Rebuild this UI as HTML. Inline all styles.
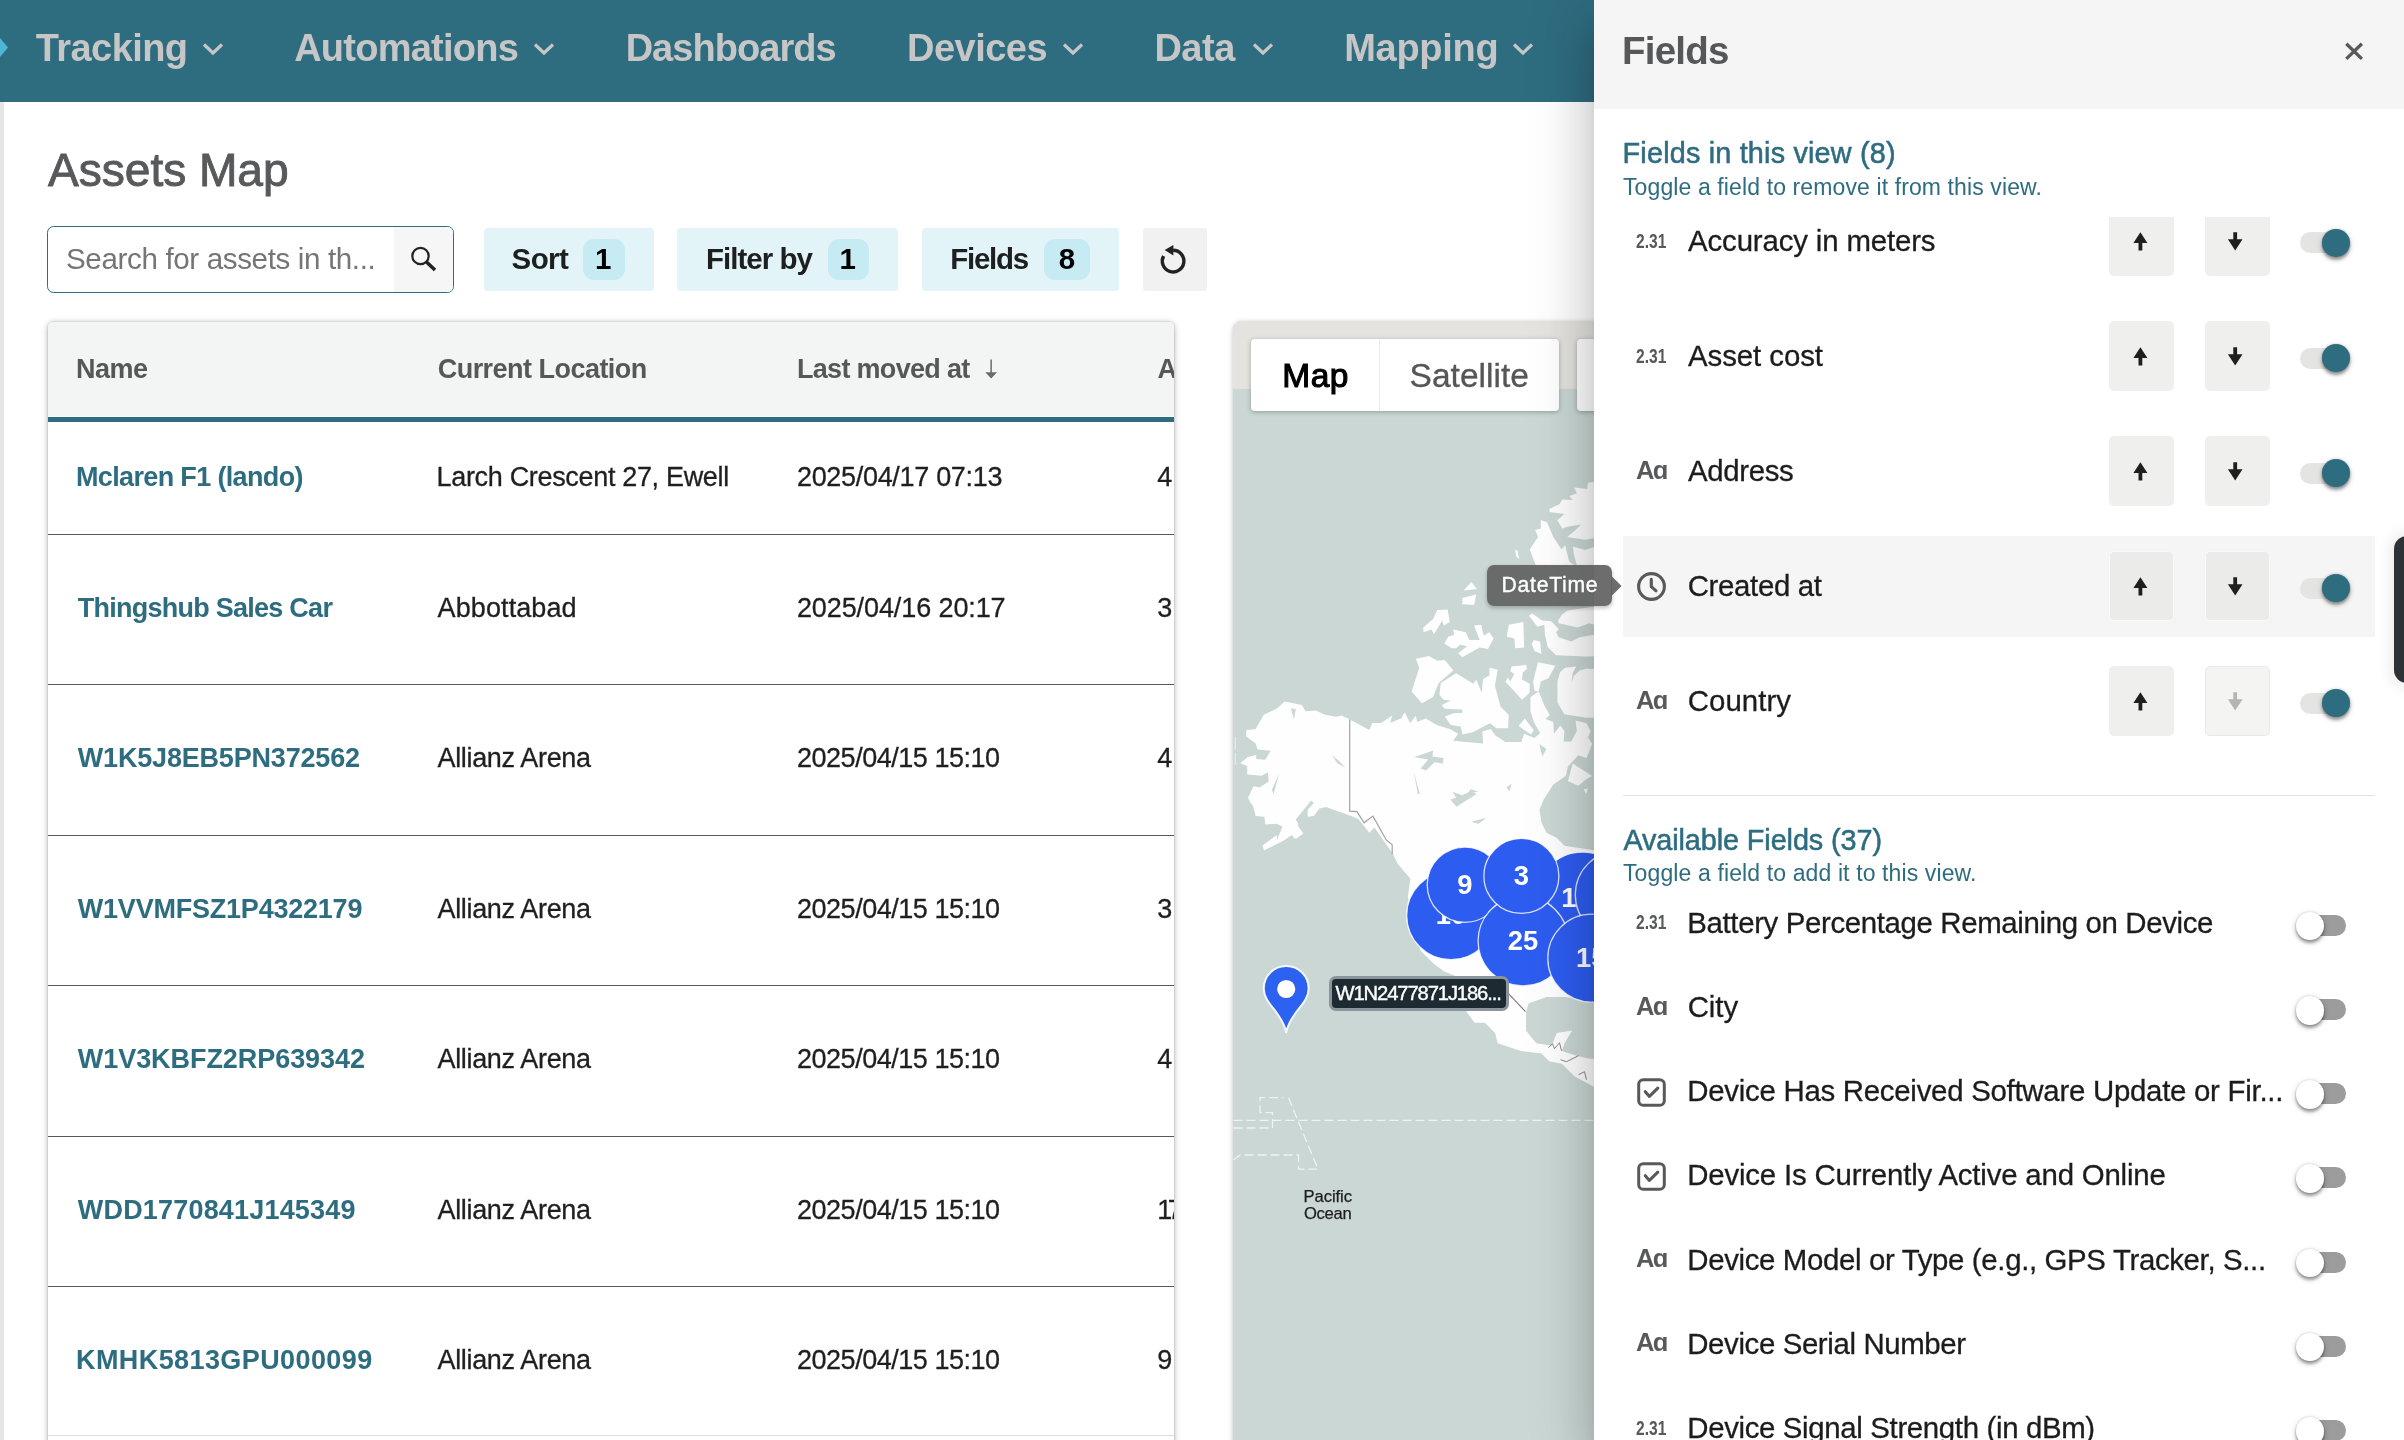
<!DOCTYPE html>
<html><head><meta charset="utf-8"><title>Assets Map</title>
<style>
*{box-sizing:border-box;margin:0;padding:0}
html,body{width:2404px;height:1440px;overflow:hidden;background:#fff;font-family:"Liberation Sans",sans-serif;}
.abs,.t{position:absolute}
.t{white-space:nowrap;line-height:1;}
#nav{left:0;top:0;width:2404px;height:102px;background:#2e6c80}
#leftbar{left:0;top:102px;width:4px;height:1338px;background:#e6e6e4}
.btn{background:#e3f4f9;border-radius:3.5px;top:228px;height:63px}
.badge{background:#c6ebf3;border-radius:11px;top:239px;height:41px}
#card{left:48px;top:321.6px;width:1126.3px;height:1130px;border-radius:5px;background:#fff;box-shadow:0 1px 6px rgba(0,0,0,.32),0 0 2px rgba(0,0,0,.2);overflow:hidden}
#thead{left:0;top:0;width:1127px;height:94px;background:#f3f5f4;border-bottom:0}
.rl{left:0;width:1127px;height:1px;background:#58595b}
#panel{left:1594px;top:0;width:810px;height:1440px;background:#fff;box-shadow:0 16px 20px -10px rgba(0,0,0,.2),0 32px 48px 4px rgba(0,0,0,.14),0 12px 60px 10px rgba(0,0,0,.12)}
#phead{left:0;top:0;width:810px;height:108.5px;background:#f4f5f4}
.ab{width:65px;height:70px;border-radius:5px;background:#efefee}
.trk{width:50px;height:21px;border-radius:11px}
.knob{width:28px;height:28px;border-radius:50%}
#root{position:absolute;left:0;top:0;width:2404px;height:1440px;overflow:hidden;will-change:transform}
</style></head><body><div id="root">

<div id="nav" class="abs"></div>
<svg class="abs" style="left:0;top:35px" width="10" height="26" viewBox="0 0 10 26"><path d="M0 3 L8 12.5 L0 22 Z" fill="#4fb6d6"/></svg>
<span class="t" style="left:35.80px;top:29px;font-size:38px;font-weight:700;color:#c7c6c6;letter-spacing:-0.573px;">Tracking</span>
<svg class="abs" style="left:200.7px;top:40px" width="24" height="18" viewBox="0 0 24 18"><path d="M3 4.5 L12 13 L21 4.5" fill="none" stroke="#c7c6c6" stroke-width="3.2"/></svg>
<span class="t" style="left:294.20px;top:29px;font-size:38px;font-weight:700;color:#c7c6c6;letter-spacing:-0.764px;">Automations</span>
<svg class="abs" style="left:532.1px;top:40px" width="24" height="18" viewBox="0 0 24 18"><path d="M3 4.5 L12 13 L21 4.5" fill="none" stroke="#c7c6c6" stroke-width="3.2"/></svg>
<span class="t" style="left:625.64px;top:29px;font-size:38px;font-weight:700;color:#c7c6c6;letter-spacing:-0.943px;">Dashboards</span>
<span class="t" style="left:906.94px;top:29px;font-size:38px;font-weight:700;color:#c7c6c6;letter-spacing:-0.501px;">Devices</span>
<svg class="abs" style="left:1061.4px;top:40px" width="24" height="18" viewBox="0 0 24 18"><path d="M3 4.5 L12 13 L21 4.5" fill="none" stroke="#c7c6c6" stroke-width="3.2"/></svg>
<span class="t" style="left:1154.41px;top:29px;font-size:38px;font-weight:700;color:#c7c6c6;letter-spacing:-0.500px;">Data</span>
<svg class="abs" style="left:1250.7px;top:40px" width="24" height="18" viewBox="0 0 24 18"><path d="M3 4.5 L12 13 L21 4.5" fill="none" stroke="#c7c6c6" stroke-width="3.2"/></svg>
<span class="t" style="left:1344.21px;top:29px;font-size:38px;font-weight:700;color:#c7c6c6;letter-spacing:-0.289px;">Mapping</span>
<svg class="abs" style="left:1511px;top:40px" width="24" height="18" viewBox="0 0 24 18"><path d="M3 4.5 L12 13 L21 4.5" fill="none" stroke="#c7c6c6" stroke-width="3.2"/></svg>
<div id="leftbar" class="abs"></div>
<span class="t" style="left:48.00px;top:147px;font-size:46.2px;font-weight:400;color:#58595b;letter-spacing:-0.073px;-webkit-text-stroke:0.9px #58595b;">Assets Map</span>
<div class="abs" style="left:46.8px;top:226px;width:407.2px;height:67px;border:1.6px solid #2e6c80;border-radius:6.5px;background:#fff;overflow:hidden"><div class="abs" style="left:346.3px;top:0;width:60px;height:65px;background:#f6f6f6"></div></div>
<span class="t" style="left:66.00px;top:244px;font-size:29.6px;font-weight:400;color:#757575;letter-spacing:-0.373px;">Search for assets in th...</span>
<svg class="abs" style="left:408px;top:243px" width="32" height="32" viewBox="0 0 32 32"><circle cx="12.5" cy="13" r="8.2" fill="none" stroke="#222" stroke-width="2.2"/><path d="M18.5 19 L27 27" stroke="#222" stroke-width="3.6" stroke-linecap="butt"/></svg>
<div class="abs btn" style="left:484px;width:170px"></div>
<div class="abs badge" style="left:583px;width:42px"></div>
<span class="t" style="left:511.50px;top:244px;font-size:29.5px;font-weight:700;color:#1d1f20;letter-spacing:-0.543px;">Sort</span>
<span class="t" style="left:594.90px;top:244px;font-size:29.5px;font-weight:700;color:#000;">1</span>
<div class="abs btn" style="left:677px;width:221px"></div>
<div class="abs badge" style="left:828px;width:41px"></div>
<span class="t" style="left:706.00px;top:244px;font-size:29.5px;font-weight:700;color:#1d1f20;letter-spacing:-0.971px;">Filter by</span>
<span class="t" style="left:839.50px;top:244px;font-size:29.5px;font-weight:700;color:#000;">1</span>
<div class="abs btn" style="left:922px;width:197px"></div>
<div class="abs badge" style="left:1044px;width:46px"></div>
<span class="t" style="left:950.20px;top:244px;font-size:29.5px;font-weight:700;color:#1d1f20;letter-spacing:-1.245px;">Fields</span>
<span class="t" style="left:1058.70px;top:244px;font-size:29.5px;font-weight:700;color:#000;">8</span>
<div class="abs" style="left:1143px;top:228px;width:64px;height:63px;border-radius:3.5px;background:#f1f1f1"></div>
<svg class="abs" style="left:1155px;top:240px" width="40" height="40" viewBox="0 0 40 40"><path d="M18.1 10.3 A10.8 10.8 0 1 1 8.56 16.03" fill="none" stroke="#222" stroke-width="3.4"/><path d="M18.4 5 L18.4 15.4 L9.6 10.1 Z" fill="#222"/></svg>
<div id="card" class="abs"><div id="thead" class="abs"></div><div class="abs" style="left:0;top:95px;width:1127px;height:5px;background:#2e6c80"></div>
<div class="abs rl" style="top:212px"></div>
<div class="abs rl" style="top:362px"></div>
<div class="abs rl" style="top:513px"></div>
<div class="abs rl" style="top:663px"></div>
<div class="abs rl" style="top:814px"></div>
<div class="abs rl" style="top:964px"></div>
<div class="abs" style="left:0;top:1113px;width:1127px;height:1px;background:#dedede"></div>
</div>
<span class="t" style="left:76.00px;top:356px;font-size:27px;font-weight:700;color:#555759;letter-spacing:-0.490px;">Name</span>
<span class="t" style="left:437.71px;top:356px;font-size:27px;font-weight:700;color:#555759;letter-spacing:-0.527px;">Current Location</span>
<span class="t" style="left:797.00px;top:356px;font-size:27px;font-weight:700;color:#555759;letter-spacing:-0.696px;">Last moved at</span>
<svg class="abs" style="left:984px;top:357px" width="16" height="24" viewBox="0 0 16 24"><path d="M7.15 2.6 V16" fill="none" stroke="#6b6b6b" stroke-width="1.5"/><path d="M1.3 15.3 H13 L7.15 21.5 Z" fill="#6b6b6b"/></svg>
<div class="abs" style="left:0;top:0;width:1174.3px;height:1440px;overflow:hidden">
<span class="t" style="left:1157.50px;top:356px;font-size:27px;font-weight:700;color:#555759;">A</span>
<span class="t" style="left:76.00px;top:464px;font-size:27px;font-weight:700;color:#2e6c80;letter-spacing:-0.650px;">Mclaren F1 (lando)</span>
<span class="t" style="left:436.56px;top:464px;font-size:27px;font-weight:400;color:#1f1f1f;letter-spacing:-0.327px;-webkit-text-stroke:0.3px #1f1f1f;">Larch Crescent 27, Ewell</span>
<span class="t" style="left:796.96px;top:464px;font-size:27px;font-weight:400;color:#1f1f1f;letter-spacing:-0.312px;-webkit-text-stroke:0.3px #1f1f1f;">2025/04/17 07:13</span>
<span class="t" style="left:1157.30px;top:464px;font-size:27px;font-weight:400;color:#1f1f1f;-webkit-text-stroke:0.3px #1f1f1f;">4</span>
<span class="t" style="left:77.78px;top:595px;font-size:27px;font-weight:700;color:#2e6c80;letter-spacing:-0.746px;">Thingshub Sales Car</span>
<span class="t" style="left:437.54px;top:595px;font-size:27px;font-weight:400;color:#1f1f1f;letter-spacing:0.108px;-webkit-text-stroke:0.3px #1f1f1f;">Abbottabad</span>
<span class="t" style="left:796.96px;top:595px;font-size:27px;font-weight:400;color:#1f1f1f;letter-spacing:-0.101px;-webkit-text-stroke:0.3px #1f1f1f;">2025/04/16 20:17</span>
<span class="t" style="left:1157.30px;top:595px;font-size:27px;font-weight:400;color:#1f1f1f;-webkit-text-stroke:0.3px #1f1f1f;">3</span>
<span class="t" style="left:77.82px;top:745px;font-size:27px;font-weight:700;color:#2e6c80;letter-spacing:-0.188px;">W1K5J8EB5PN372562</span>
<span class="t" style="left:437.54px;top:745px;font-size:27px;font-weight:400;color:#1f1f1f;letter-spacing:-0.342px;-webkit-text-stroke:0.3px #1f1f1f;">Allianz Arena</span>
<span class="t" style="left:796.96px;top:745px;font-size:27px;font-weight:400;color:#1f1f1f;letter-spacing:-0.469px;-webkit-text-stroke:0.3px #1f1f1f;">2025/04/15 15:10</span>
<span class="t" style="left:1157.30px;top:745px;font-size:27px;font-weight:400;color:#1f1f1f;-webkit-text-stroke:0.3px #1f1f1f;">4</span>
<span class="t" style="left:77.82px;top:896px;font-size:27px;font-weight:700;color:#2e6c80;letter-spacing:-0.221px;">W1VVMFSZ1P4322179</span>
<span class="t" style="left:437.54px;top:896px;font-size:27px;font-weight:400;color:#1f1f1f;letter-spacing:-0.342px;-webkit-text-stroke:0.3px #1f1f1f;">Allianz Arena</span>
<span class="t" style="left:796.96px;top:896px;font-size:27px;font-weight:400;color:#1f1f1f;letter-spacing:-0.469px;-webkit-text-stroke:0.3px #1f1f1f;">2025/04/15 15:10</span>
<span class="t" style="left:1157.30px;top:896px;font-size:27px;font-weight:400;color:#1f1f1f;-webkit-text-stroke:0.3px #1f1f1f;">3</span>
<span class="t" style="left:77.82px;top:1046px;font-size:27px;font-weight:700;color:#2e6c80;letter-spacing:-0.060px;">W1V3KBFZ2RP639342</span>
<span class="t" style="left:437.54px;top:1046px;font-size:27px;font-weight:400;color:#1f1f1f;letter-spacing:-0.342px;-webkit-text-stroke:0.3px #1f1f1f;">Allianz Arena</span>
<span class="t" style="left:796.96px;top:1046px;font-size:27px;font-weight:400;color:#1f1f1f;letter-spacing:-0.469px;-webkit-text-stroke:0.3px #1f1f1f;">2025/04/15 15:10</span>
<span class="t" style="left:1157.30px;top:1046px;font-size:27px;font-weight:400;color:#1f1f1f;-webkit-text-stroke:0.3px #1f1f1f;">4</span>
<span class="t" style="left:77.82px;top:1197px;font-size:27px;font-weight:700;color:#2e6c80;letter-spacing:0.186px;">WDD1770841J145349</span>
<span class="t" style="left:437.54px;top:1197px;font-size:27px;font-weight:400;color:#1f1f1f;letter-spacing:-0.342px;-webkit-text-stroke:0.3px #1f1f1f;">Allianz Arena</span>
<span class="t" style="left:796.96px;top:1197px;font-size:27px;font-weight:400;color:#1f1f1f;letter-spacing:-0.469px;-webkit-text-stroke:0.3px #1f1f1f;">2025/04/15 15:10</span>
<span class="t" style="left:1157.30px;top:1197px;font-size:27px;font-weight:400;color:#1f1f1f;-webkit-text-stroke:0.3px #1f1f1f;letter-spacing:-4.5px;">17</span>
<span class="t" style="left:76.00px;top:1347px;font-size:27px;font-weight:700;color:#2e6c80;letter-spacing:0.411px;">KMHK5813GPU000099</span>
<span class="t" style="left:437.54px;top:1347px;font-size:27px;font-weight:400;color:#1f1f1f;letter-spacing:-0.342px;-webkit-text-stroke:0.3px #1f1f1f;">Allianz Arena</span>
<span class="t" style="left:796.96px;top:1347px;font-size:27px;font-weight:400;color:#1f1f1f;letter-spacing:-0.469px;-webkit-text-stroke:0.3px #1f1f1f;">2025/04/15 15:10</span>
<span class="t" style="left:1157.30px;top:1347px;font-size:27px;font-weight:400;color:#1f1f1f;-webkit-text-stroke:0.3px #1f1f1f;">9</span>
</div>
<div class="abs" style="left:1232.5px;top:321.3px;width:420px;height:1140px;border-radius:9px;overflow:hidden;background:#cad7d5;box-shadow:0 1px 5px rgba(0,0,0,.25)">
<svg class="abs" style="left:0;top:0" width="420" height="1140" viewBox="1232.5 321.3 420 1140">
<rect x="1232" y="321" width="420" height="68.2" fill="#e5e3df"/>
<polygon points="1284.2,701.8 1301.5,705.3 1305.0,711.5 1315.4,710.8 1324.4,715.0 1335.6,717.1 1341.1,715.7 1349.4,719.9 1368.9,730.3 1371.7,723.3 1380.7,723.3 1391.8,715.7 1389.7,723.3 1400.8,718.5 1404.2,712.5 1409.7,723.6 1415.3,716.0 1416.7,722.2 1425.0,718.8 1437.5,725.7 1449.3,729.2 1457.6,734.0 1452.8,741.0 1482.6,743.8 1481.9,731.9 1490.3,729.2 1495.1,736.1 1504.9,742.4 1520.8,742.4 1523.6,734.0 1534.0,738.2 1539.6,733.3 1533.3,722.2 1529.9,711.1 1529.9,697.2 1538.2,691.7 1544.4,706.9 1549.3,715.3 1545.1,719.4 1552.8,722.2 1553.5,734.0 1559.7,725.7 1563.9,731.2 1563.2,741.7 1570.8,741.7 1576.4,731.2 1575.0,720.8 1586.1,723.6 1590.3,731.9 1587.5,737.5 1591.7,744.4 1586.1,758.3 1577.8,755.6 1567.4,766.7 1565.3,776.4 1552.8,784.7 1543.1,800.0 1539.0,810.0 1541.0,823.0 1546.0,833.0 1556.0,838.0 1564.0,846.0 1610.0,853.0 1610.0,1000.0 1593.6,999.9 1564.0,997.3 1546.0,997.3 1528.0,1003.7 1525.5,1012.7 1525.5,1030.7 1535.8,1043.5 1551.2,1046.1 1556.3,1033.3 1571.7,1030.7 1564.0,1043.5 1561.4,1051.2 1576.9,1056.4 1589.7,1059.0 1610.0,1060.0 1610.0,1095.0 1593.6,1087.2 1574.3,1076.9 1561.4,1064.1 1548.6,1061.5 1540.9,1053.8 1520.3,1051.2 1497.2,1043.5 1494.6,1033.3 1484.4,1023.0 1474.1,1023.0 1466.4,1012.7 1456.1,976.7 1443.3,971.6 1433.0,963.9 1420.1,951.0 1407.3,897.1 1409.9,879.1 1397.0,863.7 1391.9,853.4 1373.9,827.7 1368.9,833.1 1357.8,819.2 1349.4,815.7 1332.8,810.1 1325.8,807.4 1318.9,808.8 1313.3,816.4 1307.1,817.1 1307.1,810.1 1313.3,803.2 1310.6,801.1 1295.3,819.9 1298.1,824.7 1296.8,825.1 1301.9,832.8 1294.2,839.3 1291.7,835.4 1281.4,841.8 1263.4,850.8 1262.1,845.7 1276.2,835.4 1276.5,840.0 1282.1,826.8 1275.8,824.0 1264.7,824.7 1264.0,817.1 1255.0,816.4 1252.9,807.4 1247.4,798.3 1252.9,786.5 1259.2,787.9 1268.2,781.7 1267.5,772.6 1261.2,776.1 1246.7,774.7 1246.7,766.4 1239.7,763.6 1247.4,757.4 1255.7,755.3 1255.7,759.4 1264.7,760.1 1270.3,751.1 1257.1,749.7 1255.0,743.5 1245.3,736.5 1246.0,730.3 1255.0,729.6 1263.3,715.0 1276.5,708.8" fill="#fefefe" />
<polygon points="1436.8,610.4 1447.2,609.7 1449.3,622.2 1443.1,625.7 1441.7,620.8 1433.3,634.7 1431.2,629.9 1422.9,632.6 1422.9,627.8 1432.6,619.4" fill="#fefefe" />
<polygon points="1452.8,629.9 1465.3,632.6 1468.8,640.3 1479.2,640.3 1473.6,625.7 1480.6,625.0 1483.3,636.1 1488.9,632.6 1493.1,638.9 1487.5,649.3 1479.2,647.9 1461.8,657.6 1457.6,653.5 1466.7,646.5 1459.7,645.1 1455.6,648.6 1451.4,648.6 1443.8,643.8 1447.9,636.8 1453.5,635.4" fill="#fefefe" />
<polygon points="1508.3,625.0 1522.9,622.2 1523.6,647.9 1514.6,648.6 1513.9,638.9 1506.2,636.8" fill="#fefefe" />
<polygon points="1533.3,640.3 1539.6,641.7 1541.0,654.2 1534.0,651.4 1531.2,644.4" fill="#fefefe" />
<polygon points="1528.5,616.0 1531.9,613.9 1541.7,620.8 1550.7,621.5 1558.3,629.2 1555.6,632.6 1558.3,637.5 1570.8,641.7 1579.2,637.5 1608.3,632.6 1608.3,656.2 1584.7,656.9 1555.6,655.6 1547.2,647.2 1544.4,634.7 1543.8,625.0 1536.8,627.1" fill="#fefefe" />
<polygon points="1557.6,620.8 1561.1,615.3 1566.7,611.1 1608.3,604.2 1608.3,629.9 1588.9,623.6 1577.1,627.8 1558.3,623.6" fill="#fefefe" />
<polygon points="1415.3,659.0 1428.5,656.2 1436.8,661.1 1444.4,660.4 1452.8,670.8 1438.2,683.3 1432.6,697.2 1421.5,703.5 1411.1,691.7 1418.8,668.1" fill="#fefefe" />
<polygon points="1440.3,683.3 1455.6,673.6 1472.9,684.0 1475.7,679.9 1481.2,693.1 1482.6,679.2 1488.9,675.7 1488.9,668.1 1497.2,670.1 1494.4,686.1 1500.0,706.9 1508.3,715.3 1507.6,728.5 1495.8,728.5 1489.6,723.6 1472.2,732.6 1461.8,734.7 1460.4,727.1 1450.0,725.0 1444.4,716.7 1453.5,713.2 1461.8,713.2 1461.8,709.7 1444.4,709.0 1441.0,705.6 1450.0,700.7 1443.1,700.0 1438.9,695.1" fill="#fefefe" />
<polygon points="1511.1,666.7 1525.7,665.3 1526.4,669.4 1522.2,672.9 1521.5,679.9 1529.2,684.0 1529.2,693.1 1521.5,700.0 1504.9,681.9 1507.6,677.8 1509.7,681.9 1513.9,674.3 1509.7,671.5" fill="#fefefe" />
<polygon points="1537.5,662.5 1554.9,666.0 1547.9,678.5 1540.3,681.9 1538.2,691.7 1534.0,691.0 1532.6,681.9" fill="#fefefe" />
<polygon points="1564.6,668.1 1575.7,666.7 1572.2,673.6 1570.8,683.3 1573.6,675.7 1579.2,670.8 1586.1,668.8 1608.3,670.8 1608.3,718.1 1586.1,718.1 1563.9,714.6 1556.9,702.8 1556.9,681.9 1559.7,672.2" fill="#fefefe" />
<polygon points="1518.1,726.4 1524.3,718.8 1533.3,730.6 1530.6,734.7" fill="#fefefe" />
<polygon points="1572.2,763.9 1591.7,776.4 1586.1,779.2 1577.8,786.1 1567.4,781.2" fill="#fefefe" />
<polygon points="1583.3,789.6 1587.5,788.9 1585.4,794.4" fill="#fefefe" />
<polygon points="1608.3,480.3 1587.5,483.1 1586.8,489.3 1573.6,487.9 1576.4,493.5 1568.8,496.2 1572.2,500.4 1561.8,499.7 1559.0,504.6 1548.6,509.4 1549.3,512.2 1563.9,514.3 1556.9,520.6 1561.8,528.9 1568.1,526.8 1580.6,524.7 1575.0,530.3 1566.7,537.2 1584.7,540.0 1608.3,535.8" fill="#fefefe" />
<polygon points="1540.3,520.3 1546.5,522.6 1552.8,537.2 1561.1,549.7 1564.6,545.6 1568.8,562.2 1575.0,565.7 1535.4,565.7 1534.0,562.2 1529.2,549.7 1537.5,537.2 1534.7,530.3 1540.3,528.9" fill="#fefefe" />
<polygon points="1572.2,546.9 1584.7,550.4 1608.3,542.1 1608.3,565.7 1576.4,565.7 1573.6,555.3" fill="#fefefe" />
<polygon points="1470.8,582.4 1463.2,590.7 1476.4,589.3" fill="#fefefe" />
<polygon points="1461.8,598.3 1475.7,594.9 1473.6,605.3 1461.8,604.6" fill="#fefefe" />
<polygon points="1514.6,551.1 1516.7,550.4 1518.8,559.4 1516.0,557.4" fill="#fefefe" />
<polygon points="1295.3,833.8 1300.8,831.0 1302.9,833.8 1295.3,839.3" fill="#fefefe" />
<polygon points="1413.9,757.6 1432.6,750.7 1431.9,756.9 1443.1,758.3 1442.4,763.9 1434.0,762.5 1425.7,770.8 1420.1,768.8 1427.8,759.7" fill="#cad7d5" />
<polygon points="1450.0,800.0 1470.8,791.7 1476.0,794.4 1456.0,807.0" fill="#cad7d5" />
<polygon points="1470.8,822.0 1486.0,818.0 1478.0,824.0" fill="#cad7d5" />
<polygon points="1331.4,755.3 1336.9,763.6 1344.6,767.8 1339.7,762.2" fill="#cad7d5" />
<polygon points="1290.4,708.8 1295.3,709.2 1293.5,719.9" fill="#cad7d5" />
<polygon points="1278.6,774.0 1273.1,794.2 1271.4,790.0" fill="#cad7d5" />
<polygon points="1538.9,744.4 1545.8,749.3 1541.7,756.9" fill="#cad7d5" />
<polygon points="1506.2,787.5 1511.1,784.0 1509.0,791.7" fill="#cad7d5" />
<polygon points="1452.1,792.4 1465.3,796.5 1470.1,789.6 1477.8,791.7 1469.4,793.8 1465.3,800.0 1456.9,800.0" fill="#cad7d5" />
<polygon points="1413.2,772.2 1419.4,794.4 1417.4,794.4" fill="#cad7d5" />
<path d="M1349.2 719.9 L1349.2 811.5 L1356.4 811.9 L1363.6 823.1 L1372.4 816.4 L1385.6 840.0 L1391.7 845.0 L1391.7 854.5" fill="none" stroke="#a3a3a3" stroke-width="1.2"/>
<path d="M1508 994 L1525 1012" stroke="#7d7d7d" stroke-width="1.2"/>
<path d="M1548 1048 l4 -4 l2 5 l5 -6 l2 8 M1560 1060 l6 2 l12 -6 M1578 1075 l6 -3 l2 8" fill="none" stroke="#8a8a8a" stroke-width="1"/>
<path d="M1233 1120.6 H1600" fill="none" stroke="#eef3f1" stroke-width="1.3" stroke-dasharray="9 4"/>
<path d="M1233 1128.3 H1272 V1113 H1259.5 V1098 H1283" fill="none" stroke="#eef3f1" stroke-width="1.3" stroke-dasharray="9 4"/>
<path d="M1288 1098 L1317.5 1169.5 H1298 V1155.3 H1240 L1233 1160" fill="none" stroke="#eef3f1" stroke-width="1.3" stroke-dasharray="9 4"/>
<path d="M1234.8 737 V765" stroke="#e6eeec" stroke-width="1.2" stroke-dasharray="13 3" fill="none"/>
<circle cx="1450.5" cy="915.7" r="44.3" fill="#2d5cf0" stroke="rgba(255,255,255,.82)" stroke-width="1.3"/>
<text x="1450.5" y="924.6" font-family="Liberation Sans, sans-serif" font-weight="700" font-size="27.4" fill="#fff" text-anchor="middle">10</text>
<circle cx="1582" cy="898.5" r="46" fill="#2d5cf0" stroke="rgba(255,255,255,.82)" stroke-width="1.3"/>
<text x="1576" y="907.4" font-family="Liberation Sans, sans-serif" font-weight="700" font-size="27.4" fill="#fff" text-anchor="middle">12</text>
<circle cx="1464.3" cy="885" r="37.6" fill="#2d5cf0" stroke="rgba(255,255,255,.82)" stroke-width="1.3"/>
<text x="1464.3" y="893.9" font-family="Liberation Sans, sans-serif" font-weight="700" font-size="27.4" fill="#fff" text-anchor="middle">9</text>
<circle cx="1522.6" cy="941.3" r="45" fill="#2d5cf0" stroke="rgba(255,255,255,.82)" stroke-width="1.3"/>
<text x="1522.6" y="950.2" font-family="Liberation Sans, sans-serif" font-weight="700" font-size="27.4" fill="#fff" text-anchor="middle">25</text>
<circle cx="1618.8" cy="895" r="44" fill="#2d5cf0" stroke="rgba(255,255,255,.82)" stroke-width="1.3"/>
<circle cx="1591.3" cy="958.5" r="44" fill="#2d5cf0" stroke="rgba(255,255,255,.82)" stroke-width="1.3"/>
<text x="1590.8" y="967.4" font-family="Liberation Sans, sans-serif" font-weight="700" font-size="27.4" fill="#fff" text-anchor="middle">15</text>
<circle cx="1520.9" cy="876.2" r="37.5" fill="#2d5cf0" stroke="rgba(255,255,255,.82)" stroke-width="1.3"/>
<text x="1520.9" y="885.1" font-family="Liberation Sans, sans-serif" font-weight="700" font-size="27.4" fill="#fff" text-anchor="middle">3</text>
<path d="M1285.7 1032.5 C1284.5 1026 1280.7 1019.5 1277.2 1014.5 C1271.7 1006.5 1263.3 999.5 1263.3 988.7 A22.4 22.4 0 1 1 1308.1 988.7 C1308.1 999.5 1299.7 1006.5 1294.2 1014.5 C1290.7 1019.5 1286.9 1026 1285.7 1032.5 Z" fill="#2d62f0" stroke="#fff" stroke-width="2" stroke-opacity=".9" stroke-linejoin="round"/>
<circle cx="1285.7" cy="989.3" r="9.1" fill="#fff"/>
</svg>
</div>
<div class="abs" style="left:1251px;top:339px;width:308px;height:72px;border-radius:4px;background:#fff;box-shadow:0 1px 5px rgba(0,0,0,.28)"></div>
<div class="abs" style="left:1378.5px;top:339px;width:1.5px;height:72px;background:#ececec"></div>
<div class="abs" style="left:1577px;top:339px;width:60px;height:72px;border-radius:4px;background:#fff;box-shadow:0 1px 5px rgba(0,0,0,.28)"></div>
<span class="t" style="left:1282.30px;top:359px;font-size:33.5px;font-weight:400;color:#000;letter-spacing:0.451px;-webkit-text-stroke:1.1px #000;">Map</span>
<span class="t" style="left:1409.50px;top:359px;font-size:33.5px;font-weight:400;color:#565656;letter-spacing:0.037px;-webkit-text-stroke:0.35px #565656;">Satellite</span>
<div class="abs" style="left:1329.2px;top:976px;width:179.8px;height:34.8px;border-radius:7px;background:#1e2a32;border:3px solid #8a949a"></div>
<span class="t" style="left:1335.50px;top:983px;font-size:20.2px;font-weight:400;color:#fff;letter-spacing:-1.107px;-webkit-text-stroke:0.4px #fff;">W1N2477871J186...</span>
<span class="t" style="left:1303.50px;top:1189px;font-size:16.6px;font-weight:400;color:#1c1c1c;letter-spacing:-0.058px;-webkit-text-stroke:0.25px #1c1c1c;">Pacific</span>
<span class="t" style="left:1304.00px;top:1206px;font-size:16.6px;font-weight:400;color:#1c1c1c;letter-spacing:-0.309px;-webkit-text-stroke:0.25px #1c1c1c;">Ocean</span>
<div id="panel" class="abs"><div id="phead" class="abs"></div></div>
<span class="t" style="left:1622.00px;top:32px;font-size:38.5px;font-weight:700;color:#555759;letter-spacing:-0.776px;">Fields</span>
<svg class="abs" style="left:2342px;top:39px" width="24" height="24" viewBox="0 0 24 24"><path d="M4.3 4.7 L19.9 19.9 M19.9 4.7 L4.3 19.9" stroke="#58595b" stroke-width="3.3" fill="none"/></svg>
<span class="t" style="left:1622.60px;top:139px;font-size:28.8px;font-weight:400;color:#2e6c80;letter-spacing:0.184px;-webkit-text-stroke:0.55px #2e6c80;">Fields in this view (8)</span>
<span class="t" style="left:1623.00px;top:176px;font-size:23px;font-weight:400;color:#2e6c80;letter-spacing:0.113px;">Toggle a field to remove it from this view.</span>
<div class="abs" style="left:1623px;top:536.4px;width:752px;height:100.2px;background:#f5f5f5"></div>
<div class="abs" style="left:1594px;top:217px;width:810px;height:600px;overflow:hidden">
<div class="abs ab" style="left:515px;top:-11px;background:#efefee;"></div>
<div class="abs ab" style="left:611px;top:-11px;background:#efefee;"></div>
<svg class="abs" style="left:515px;top:-11px" width="170" height="70" viewBox="0 0 170 70"><path d="M31.4 26.3 l-7 10.8 h5.1 v7.5 h3.8 v-7.5 h5.1 z" fill="#1f1f1f"/><path d="M124.3 26.3 h3.8 v7 h5.4 l-7.3 11.1 l-7.3 -11.1 h5.4 z" fill="#1f1f1f"/></svg>
<div class="abs ab" style="left:515px;top:104.1px;background:#efefee;"></div>
<div class="abs ab" style="left:611px;top:104.1px;background:#efefee;"></div>
<svg class="abs" style="left:515px;top:104.1px" width="170" height="70" viewBox="0 0 170 70"><path d="M31.4 26.3 l-7 10.8 h5.1 v7.5 h3.8 v-7.5 h5.1 z" fill="#1f1f1f"/><path d="M124.3 26.3 h3.8 v7 h5.4 l-7.3 11.1 l-7.3 -11.1 h5.4 z" fill="#1f1f1f"/></svg>
<div class="abs ab" style="left:515px;top:219.1px;background:#efefee;"></div>
<div class="abs ab" style="left:611px;top:219.1px;background:#efefee;"></div>
<svg class="abs" style="left:515px;top:219.1px" width="170" height="70" viewBox="0 0 170 70"><path d="M31.4 26.3 l-7 10.8 h5.1 v7.5 h3.8 v-7.5 h5.1 z" fill="#1f1f1f"/><path d="M124.3 26.3 h3.8 v7 h5.4 l-7.3 11.1 l-7.3 -11.1 h5.4 z" fill="#1f1f1f"/></svg>
<div class="abs ab" style="left:515px;top:334.1px;background:#ebebea;border:1.5px solid #f9f9f9;"></div>
<div class="abs ab" style="left:611px;top:334.1px;background:#ebebea;border:1.5px solid #f9f9f9;"></div>
<svg class="abs" style="left:515px;top:334.1px" width="170" height="70" viewBox="0 0 170 70"><path d="M31.4 26.3 l-7 10.8 h5.1 v7.5 h3.8 v-7.5 h5.1 z" fill="#1f1f1f"/><path d="M124.3 26.3 h3.8 v7 h5.4 l-7.3 11.1 l-7.3 -11.1 h5.4 z" fill="#1f1f1f"/></svg>
<div class="abs ab" style="left:515px;top:449.1px;background:#efefee;"></div>
<div class="abs ab" style="left:611px;top:449.1px;background:#f4f4f3;border:1.5px solid #e9e9e8;"></div>
<svg class="abs" style="left:515px;top:449.1px" width="170" height="70" viewBox="0 0 170 70"><path d="M31.4 26.3 l-7 10.8 h5.1 v7.5 h3.8 v-7.5 h5.1 z" fill="#1f1f1f"/><path d="M124.3 26.3 h3.8 v7 h5.4 l-7.3 11.1 l-7.3 -11.1 h5.4 z" fill="#b4b4b3"/></svg>
</div>
<span class="t" style="left:1636.30px;top:232px;font-size:19.3px;font-weight:700;color:#58595b;transform:scaleX(0.8073);transform-origin:0 0;">2.31</span>
<span class="t" style="left:1688.09px;top:226px;font-size:29.4px;font-weight:400;color:#1c1c1c;letter-spacing:-0.143px;-webkit-text-stroke:0.3px #1c1c1c;">Accuracy in meters</span>
<div class="abs trk" style="left:2300px;top:232.4px;background:#e4e4e2"></div>
<div class="abs knob" style="left:2321.5px;top:228.7px;width:28.4px;height:28.4px;background:#2e6c80;box-shadow:0 3px 3px rgba(0,0,0,.3),0 2px 6px rgba(0,0,0,.2),0 0 2px rgba(0,0,0,.2)"></div>
<span class="t" style="left:1636.30px;top:347px;font-size:19.3px;font-weight:700;color:#58595b;transform:scaleX(0.8073);transform-origin:0 0;">2.31</span>
<span class="t" style="left:1688.09px;top:341px;font-size:29.4px;font-weight:400;color:#1c1c1c;letter-spacing:-0.075px;-webkit-text-stroke:0.3px #1c1c1c;">Asset cost</span>
<div class="abs trk" style="left:2300px;top:347.5px;background:#e4e4e2"></div>
<div class="abs knob" style="left:2321.5px;top:343.8px;width:28.4px;height:28.4px;background:#2e6c80;box-shadow:0 3px 3px rgba(0,0,0,.3),0 2px 6px rgba(0,0,0,.2),0 0 2px rgba(0,0,0,.2)"></div>
<span class="t" style="left:1636.00px;top:458px;font-size:25.5px;font-weight:700;color:#58595b;letter-spacing:-1.667px;">A&#x251;</span>
<span class="t" style="left:1688.09px;top:456px;font-size:29.4px;font-weight:400;color:#1c1c1c;letter-spacing:-0.348px;-webkit-text-stroke:0.3px #1c1c1c;">Address</span>
<div class="abs trk" style="left:2300px;top:462.5px;background:#e4e4e2"></div>
<div class="abs knob" style="left:2321.5px;top:458.8px;width:28.4px;height:28.4px;background:#2e6c80;box-shadow:0 3px 3px rgba(0,0,0,.3),0 2px 6px rgba(0,0,0,.2),0 0 2px rgba(0,0,0,.2)"></div>
<svg class="abs" style="left:1635px;top:570.3px" width="33" height="33" viewBox="0 0 33 33"><circle cx="16.5" cy="16.5" r="12.9" fill="none" stroke="#58595b" stroke-width="3.1"/><path d="M16.3 9.3 V16.7 L21 20.8" fill="none" stroke="#58595b" stroke-width="3.1" stroke-linecap="round" stroke-linejoin="round"/></svg>
<span class="t" style="left:1687.73px;top:571px;font-size:29.4px;font-weight:400;color:#1c1c1c;letter-spacing:-0.331px;-webkit-text-stroke:0.3px #1c1c1c;">Created at</span>
<div class="abs trk" style="left:2300px;top:577.5px;background:#e4e4e2"></div>
<div class="abs knob" style="left:2321.5px;top:573.8px;width:28.4px;height:28.4px;background:#2e6c80;box-shadow:0 3px 3px rgba(0,0,0,.3),0 2px 6px rgba(0,0,0,.2),0 0 2px rgba(0,0,0,.2)"></div>
<span class="t" style="left:1636.00px;top:688px;font-size:25.5px;font-weight:700;color:#58595b;letter-spacing:-1.667px;">A&#x251;</span>
<span class="t" style="left:1687.73px;top:686px;font-size:29.4px;font-weight:400;color:#1c1c1c;letter-spacing:0.052px;-webkit-text-stroke:0.3px #1c1c1c;">Country</span>
<div class="abs trk" style="left:2300px;top:692.5px;background:#e4e4e2"></div>
<div class="abs knob" style="left:2321.5px;top:688.8px;width:28.4px;height:28.4px;background:#2e6c80;box-shadow:0 3px 3px rgba(0,0,0,.3),0 2px 6px rgba(0,0,0,.2),0 0 2px rgba(0,0,0,.2)"></div>
<div class="abs" style="left:1623px;top:794.5px;width:752px;height:1.6px;background:#e2e3e3"></div>
<span class="t" style="left:1623.40px;top:826px;font-size:28.8px;font-weight:400;color:#2e6c80;letter-spacing:-0.087px;-webkit-text-stroke:0.55px #2e6c80;">Available Fields (37)</span>
<span class="t" style="left:1623.00px;top:862px;font-size:23px;font-weight:400;color:#2e6c80;letter-spacing:0.119px;">Toggle a field to add it to this view.</span>
<span class="t" style="left:1636.30px;top:913px;font-size:19.3px;font-weight:700;color:#58595b;transform:scaleX(0.8073);transform-origin:0 0;">2.31</span>
<span class="t" style="left:1687.25px;top:908px;font-size:29.4px;font-weight:400;color:#1c1c1c;letter-spacing:-0.350px;-webkit-text-stroke:0.3px #1c1c1c;">Battery Percentage Remaining on Device</span>
<div class="abs" style="left:2300px;top:914.7px;width:46px;height:21px;border-radius:10.5px;background:#9c9c9c"></div>
<div class="abs knob" style="left:2295.8px;top:911.7px;width:28.6px;height:28.6px;background:#fff;box-shadow:0 3px 3px rgba(0,0,0,.3),0 2px 6px rgba(0,0,0,.2),0 0 2px rgba(0,0,0,.2)"></div>
<span class="t" style="left:1636.00px;top:994px;font-size:25.5px;font-weight:700;color:#58595b;letter-spacing:-1.667px;">A&#x251;</span>
<span class="t" style="left:1687.73px;top:992px;font-size:29.4px;font-weight:400;color:#1c1c1c;letter-spacing:-0.075px;-webkit-text-stroke:0.3px #1c1c1c;">City</span>
<div class="abs" style="left:2300px;top:998.92px;width:46px;height:21px;border-radius:10.5px;background:#9c9c9c"></div>
<div class="abs knob" style="left:2295.8px;top:995.92px;width:28.6px;height:28.6px;background:#fff;box-shadow:0 3px 3px rgba(0,0,0,.3),0 2px 6px rgba(0,0,0,.2),0 0 2px rgba(0,0,0,.2)"></div>
<svg class="abs" style="left:1635px;top:1076.14px" width="33" height="33" viewBox="0 0 33 33"><rect x="3.7" y="3.7" width="25.6" height="25.6" rx="4.6" fill="none" stroke="#58595b" stroke-width="3"/><path d="M10.3 15.7 L14.4 20.4 L22.8 12.2" fill="none" stroke="#58595b" stroke-width="3.1" stroke-linecap="round" stroke-linejoin="round"/></svg>
<span class="t" style="left:1687.25px;top:1076px;font-size:29.4px;font-weight:400;color:#1c1c1c;letter-spacing:-0.262px;-webkit-text-stroke:0.3px #1c1c1c;">Device Has Received Software Update or Fir...</span>
<div class="abs" style="left:2300px;top:1083.14px;width:46px;height:21px;border-radius:10.5px;background:#9c9c9c"></div>
<div class="abs knob" style="left:2295.8px;top:1080.14px;width:28.6px;height:28.6px;background:#fff;box-shadow:0 3px 3px rgba(0,0,0,.3),0 2px 6px rgba(0,0,0,.2),0 0 2px rgba(0,0,0,.2)"></div>
<svg class="abs" style="left:1635px;top:1160.36px" width="33" height="33" viewBox="0 0 33 33"><rect x="3.7" y="3.7" width="25.6" height="25.6" rx="4.6" fill="none" stroke="#58595b" stroke-width="3"/><path d="M10.3 15.7 L14.4 20.4 L22.8 12.2" fill="none" stroke="#58595b" stroke-width="3.1" stroke-linecap="round" stroke-linejoin="round"/></svg>
<span class="t" style="left:1687.25px;top:1160px;font-size:29.4px;font-weight:400;color:#1c1c1c;letter-spacing:-0.183px;-webkit-text-stroke:0.3px #1c1c1c;">Device Is Currently Active and Online</span>
<div class="abs" style="left:2300px;top:1167.36px;width:46px;height:21px;border-radius:10.5px;background:#9c9c9c"></div>
<div class="abs knob" style="left:2295.8px;top:1164.36px;width:28.6px;height:28.6px;background:#fff;box-shadow:0 3px 3px rgba(0,0,0,.3),0 2px 6px rgba(0,0,0,.2),0 0 2px rgba(0,0,0,.2)"></div>
<span class="t" style="left:1636.00px;top:1246px;font-size:25.5px;font-weight:700;color:#58595b;letter-spacing:-1.667px;">A&#x251;</span>
<span class="t" style="left:1687.25px;top:1245px;font-size:29.4px;font-weight:400;color:#1c1c1c;letter-spacing:-0.345px;-webkit-text-stroke:0.3px #1c1c1c;">Device Model or Type (e.g., GPS Tracker, S...</span>
<div class="abs" style="left:2300px;top:1251.58px;width:46px;height:21px;border-radius:10.5px;background:#9c9c9c"></div>
<div class="abs knob" style="left:2295.8px;top:1248.58px;width:28.6px;height:28.6px;background:#fff;box-shadow:0 3px 3px rgba(0,0,0,.3),0 2px 6px rgba(0,0,0,.2),0 0 2px rgba(0,0,0,.2)"></div>
<span class="t" style="left:1636.00px;top:1330px;font-size:25.5px;font-weight:700;color:#58595b;letter-spacing:-1.667px;">A&#x251;</span>
<span class="t" style="left:1687.25px;top:1329px;font-size:29.4px;font-weight:400;color:#1c1c1c;letter-spacing:-0.370px;-webkit-text-stroke:0.3px #1c1c1c;">Device Serial Number</span>
<div class="abs" style="left:2300px;top:1335.8px;width:46px;height:21px;border-radius:10.5px;background:#9c9c9c"></div>
<div class="abs knob" style="left:2295.8px;top:1332.8px;width:28.6px;height:28.6px;background:#fff;box-shadow:0 3px 3px rgba(0,0,0,.3),0 2px 6px rgba(0,0,0,.2),0 0 2px rgba(0,0,0,.2)"></div>
<span class="t" style="left:1636.30px;top:1419px;font-size:19.3px;font-weight:700;color:#58595b;transform:scaleX(0.8073);transform-origin:0 0;">2.31</span>
<span class="t" style="left:1687.25px;top:1413px;font-size:29.4px;font-weight:400;color:#1c1c1c;letter-spacing:-0.343px;-webkit-text-stroke:0.3px #1c1c1c;">Device Signal Strength (in dBm)</span>
<div class="abs" style="left:2300px;top:1420.02px;width:46px;height:21px;border-radius:10.5px;background:#9c9c9c"></div>
<div class="abs knob" style="left:2295.8px;top:1417.02px;width:28.6px;height:28.6px;background:#fff;box-shadow:0 3px 3px rgba(0,0,0,.3),0 2px 6px rgba(0,0,0,.2),0 0 2px rgba(0,0,0,.2)"></div>
<div class="abs" style="left:2393.7px;top:536.3px;width:30px;height:147.2px;border-radius:13px;background:#2d3236;box-shadow:0 0 14px 5px rgba(0,0,0,.07)"></div>
<div class="abs" style="left:1487px;top:565px;width:125px;height:41px;border-radius:7px;background:rgba(97,97,97,.92);box-shadow:0 2px 4px rgba(0,0,0,.25)"></div>
<svg class="abs" style="left:1611px;top:574px" width="12" height="24" viewBox="0 0 12 24"><path d="M0 1.5 L10.6 12 L0 22.5 Z" fill="rgba(97,97,97,.92)"/></svg>
<span class="t" style="left:1501.50px;top:574px;font-size:21.2px;font-weight:400;color:#fff;letter-spacing:0.725px;-webkit-text-stroke:0.35px #fff;">DateTime</span>
</div></body></html>
